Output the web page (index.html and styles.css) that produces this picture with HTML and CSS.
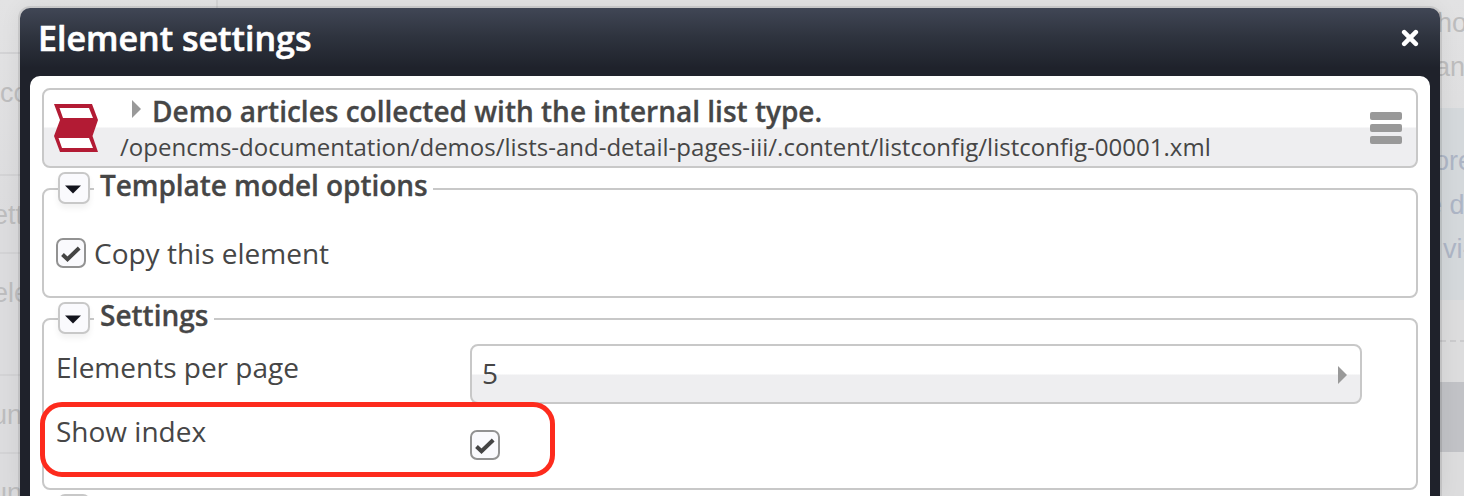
FILE: index.html
```
<!DOCTYPE html>
<html lang="en">
<head>
<meta charset="utf-8">
<title>Element settings</title>
<link rel="stylesheet" href="styles.css">
</head>
<body>
<div class="page">
  <div class="page-left">
    <div class="cell cell-first"></div>
    <div class="cell cell-tall cell-co">co</div>
    <div class="cell cell-ett">etti</div>
    <div class="cell cell-tall cell-ele">ele</div>
    <div class="cell cell-un">un</div>
    <div class="cell cell-un cell-last">un</div>
  </div>
  <div class="page-mid"></div>
  <div class="page-right">
    <div class="para"><div class="ln ln-ho">ho</div><div class="ln ln-an">an</div></div>
    <div class="note"><div class="ln ln-ore">ore</div><div class="ln ln-ed">e d</div><div class="ln ln-vi">vi-</div></div>
    <div class="dashes"></div>
    <div class="block"></div>
  </div>
</div>
<div class="dialog">
  <div class="dialog-head">
    <span class="dialog-title">Element settings</span>
    <svg class="close" width="18" height="18" viewBox="0 0 18 18"><path d="M3.200 3.200 14.800 14.800M14.800 3.200 3.200 14.800"/></svg>
  </div>
  <div class="dialog-body">
    <div class="card">
      <svg class="card-icon" width="46" height="50" viewBox="0 0 46 50"><path class="red" d="M1 1H39L45 17 39.500 33 45 49H7L1 33 7 17Z"/><path class="white" d="M6.500 5H36L40 15H10ZM5.500 35H36L40 45H9Z"/></svg>
      <div class="card-text">
        <div class="card-title"><svg class="tri" width="9" height="18" viewBox="0 0 9 18"><path d="M0 0 9 9 0 18Z"/></svg><span class="card-name">Demo articles collected with the internal list type.</span></div>
        <div class="card-path">/opencms-documentation/demos/lists-and-detail-pages-iii/.content/listconfig/listconfig-00001.xml</div>
      </div>
      <div class="menu"><i></i><i></i><i></i></div>
    </div>
    <section class="group group-model">
      <div class="legend"><span class="toggle"><svg width="16" height="9" viewBox="0 0 16 9"><path d="M0 .5H16L8 8.500Z"/></svg></span><span class="legend-text legend-model">Template model options</span></div>
      <div class="check-row"><span class="checkbox"><svg width="20" height="16" viewBox="0 0 20 16"><path d="M1.500 8.500 6.500 13.200 18.200 2"/></svg></span><span class="label label-copy">Copy this element</span></div>
    </section>
    <section class="group group-settings">
      <div class="legend"><span class="toggle"><svg width="16" height="9" viewBox="0 0 16 9"><path d="M0 .5H16L8 8.500Z"/></svg></span><span class="legend-text legend-settings">Settings</span></div>
      <div class="fields">
        <div class="field"><span class="label label-elements">Elements per page</span>
          <div class="select"><span class="select-value">5</span><svg class="tri" width="9" height="18" viewBox="0 0 9 18"><path d="M0 0 9 9 0 18Z"/></svg></div></div>
        <div class="field"><span class="label label-show">Show index</span>
          <span class="checkbox checkbox-index"><svg width="20" height="16" viewBox="0 0 20 16"><path d="M1.500 8.500 6.500 13.200 18.200 2"/></svg></span></div>
      </div>
    </section>
    <section class="group-next">
      <span class="toggle toggle-cut"></span>
    </section>
  </div>
</div>
<div class="highlight"></div>
</body>
</html>
```
FILE: styles.css
```
* { box-sizing: border-box; }
body { margin: 0; width: 1464px; height: 496px; overflow: hidden; position: relative; font-family: "Open Sans", sans-serif; color: #464646; background: #e2e2e3; }

/* dimmed page behind the dialog */
.page { display: flex; height: 496px; overflow: hidden; font: 27px/40px "Liberation Sans", sans-serif; color: #bdbdbe; }
.page-left { width: 218px; border-right: 2px solid #d5d5d6; white-space: nowrap; overflow: hidden; background: linear-gradient(#e3e3e4, #dcdcde 45%); }
.cell { height: 78px; padding-top: 19px; border-bottom: 2px solid #d3d3d5; }
.cell-first { height: 54px; }
.cell-tall { height: 122px; }
.cell-ett { text-indent: -7px; }
.cell-ele { text-indent: -7px; }
.cell-un { text-indent: -8px; }
.cell-last { height: 42px; overflow: hidden; border: 0; }
.page-mid { flex: 1; }
.page-right { width: 28px; overflow: hidden; white-space: nowrap; background: linear-gradient(#e2e2e3, #dcdcdd 40%); }
.ln { height: 44px; line-height: 44px; }
.para { height: 108px; padding-top: 1px; }
.note { height: 192px; padding-top: 31px; background: #d4d8db; color: #adb5c5; }
.ln-ho { text-indent: 1px; }
.ln-an { text-indent: -1px; }
.ln-ore { text-indent: -2px; }
.ln-ed { text-indent: -9px; }
.ln-vi { text-indent: 7px; }
.dashes { height: 2px; margin: 40px 0; background: repeating-linear-gradient(90deg, #cbcbcd 0 6px, transparent 6px 10px) 4px 0; }
.block { height: 70px; background: #c1c2c6; }

.dialog { position: absolute; left: 20px; top: 8px; width: 1420px; height: 488px; padding: 0 10px; border-radius: 10px 10px 0 0; background: linear-gradient(#404655, #2f343f 28px, #1f222b 60px); box-shadow: 0 0 0 2px rgba(0,0,0,.09), 0 0 22px rgba(0,0,0,.07); }
.dialog-head { display: flex; justify-content: space-between; align-items: center; height: 68px; padding: 0 11px 8px 8px; color: #fff; }
.dialog-title { margin-top: -1px; font-size: 34px; font-weight: 600; line-height: 60px; -webkit-text-stroke: .6px #fff; }
.close { fill: none; stroke: #fff; stroke-width: 4.600; stroke-linecap: round; }
.dialog-body { height: 420px; padding: 12px 12px 0; border-radius: 10px 10px 0 0; background: #fff; overflow: hidden; }

.card { display: flex; height: 80px; border: 2px solid #c8c8c8; border-radius: 8px; background: linear-gradient(#fff 37px, #eeeef0 38px); }
.card-icon { margin: 13px 0 0 9px; }
.red { fill: #b31b34; }
.white { fill: #fff; }
.card-text { flex: 1; padding-left: 21px; white-space: nowrap; }
.card-title { display: flex; align-items: center; height: 42px; padding-left: 12px; gap: 11px; font-size: 28px; font-weight: 600; -webkit-text-stroke: .3px; }
.card-title .tri { margin-bottom: 4px; }
.card-path { font-size: 24px; line-height: 30px; letter-spacing: .01px; }
.tri { fill: #999; }
.menu { display: flex; flex-direction: column; gap: 4px; padding: 22px 14px 0 0; }
.menu i { width: 32px; height: 8px; border-radius: 2px; background: #999; }

.group { margin-top: 20px; border: 2px solid #c8c8c8; border-radius: 8px; }
.group-model { height: 110px; }
.group-settings { height: 172px; }
.group-next { height: 2px; margin: 4px 0 0 16px; overflow: hidden; }
.legend { display: flex; gap: 4px; height: 32px; margin: -18px 0 0 14px; }
.toggle { display: flex; align-items: center; justify-content: center; width: 32px; height: 32px; padding-top: 4px; border: 2px solid #c8c8c8; border-radius: 7px; background: #fafafd; box-shadow: 0 4px 6px rgba(0,0,0,.06); }
.toggle svg { fill: #12131c; margin: -1px 2px 0 0; }
.toggle-cut { height: 32px; }
.legend-text { height: 28px; padding: 0 6px; font-size: 28px; line-height: 26px; font-weight: 600; background: #fff; -webkit-text-stroke: .3px; }
.legend-model { letter-spacing: -.07px; }
.check-row { display: flex; align-items: center; gap: 8px; height: 30px; margin: 34px 0 0 12px; }
.label { font-size: 28px; line-height: 36px; white-space: nowrap; }
.checkbox { display: flex; align-items: center; justify-content: center; width: 30px; height: 30px; border: 2px solid #929292; border-radius: 7px; background: #fafafd; }
.checkbox svg { fill: none; stroke: #444; stroke-width: 4; margin-top: 1px; }
.fields { padding: 10px 54px 0 12px; }
.field { display: grid; grid-template-columns: 414px 1fr; align-items: start; height: 60px; }
.label-elements { padding-top: 5px; }
.label-show { padding-top: 9px; }
.checkbox-index { margin-top: 26px; }
.select { display: flex; align-items: center; justify-content: space-between; height: 60px; padding: 0 13px 0 10px; border: 2px solid #c8c8c8; border-radius: 8px; background: linear-gradient(#fff 28px, #eeeef0 29px); font-size: 28px; }
.select-value { margin-top: -2px; }
.select .tri { margin-top: 1px; }
.highlight { position: absolute; left: 40px; top: 402px; width: 515px; height: 75px; border: 5px solid #fd2b1d; border-radius: 22px; }
```
